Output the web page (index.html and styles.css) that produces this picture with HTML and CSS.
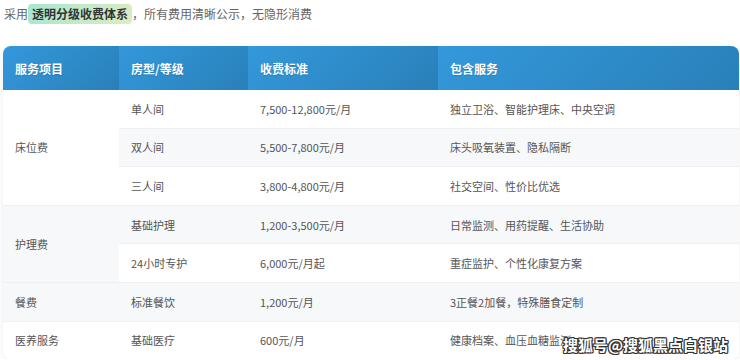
FILE: index.html
```html
<!DOCTYPE html>
<html lang="zh-CN">
<head>
    <meta charset="UTF-8">
    <meta name="viewport" content="width=device-width, initial-scale=1.0">
    <title>收费标准</title>
    <link rel="stylesheet" href="styles.css">
</head>
<body>
    <div class="page">
        <p class="intro">采用<span class="highlight">透明分级收费体系</span>，所有费用清晰公示，无隐形消费</p>

        <div class="table-wrap">
            <table class="fee-table">
                <colgroup>
                    <col class="c1"><col class="c2"><col class="c3"><col class="c4">
                </colgroup>
                <thead>
                    <tr>
                        <th>服务项目</th>
                        <th>房型/等级</th>
                        <th>收费标准</th>
                        <th>包含服务</th>
                    </tr>
                </thead>
                <tbody>
                    <tr>
                        <td rowspan="3">床位费</td>
                        <td>单人间</td>
                        <td>7,500-12,800元/月</td>
                        <td>独立卫浴、智能护理床、中央空调</td>
                    </tr>
                    <tr>
                        <td>双人间</td>
                        <td>5,500-7,800元/月</td>
                        <td>床头吸氧装置、隐私隔断</td>
                    </tr>
                    <tr>
                        <td>三人间</td>
                        <td>3,800-4,800元/月</td>
                        <td>社交空间、性价比优选</td>
                    </tr>
                    <tr>
                        <td rowspan="2">护理费</td>
                        <td>基础护理</td>
                        <td>1,200-3,500元/月</td>
                        <td>日常监测、用药提醒、生活协助</td>
                    </tr>
                    <tr>
                        <td>24小时专护</td>
                        <td>6,000元/月起</td>
                        <td>重症监护、个性化康复方案</td>
                    </tr>
                    <tr>
                        <td>餐费</td>
                        <td>标准餐饮</td>
                        <td>1,200元/月</td>
                        <td>3正餐2加餐，特殊膳食定制</td>
                    </tr>
                    <tr>
                        <td>医养服务</td>
                        <td>基础医疗</td>
                        <td>600元/月</td>
                        <td>健康档案、血压血糖监测</td>
                    </tr>
                </tbody>
            </table>
        </div>
    </div>

    <div class="watermark">搜狐号@搜狐黑点白银站</div>
</body>
</html>
```

FILE: styles.css
```css
body {
    margin: 0;
    background-color: #fff;
    font-family: "Noto Sans CJK SC", "Noto Sans", sans-serif;
    color: #555;
}
.page {
    padding: 0 1px 0 3px;
}
.intro {
    margin: 0;
    padding: 4px 0 0 1px;
    height: 42px;
    font-size: 12px;
    line-height: 20px;
    color: #666;
}
.highlight {
    display: inline-block;
    padding: 0 4px;
    border-radius: 4px;
    background: linear-gradient(120deg, #a8e6cf 0%, #dcedc1 100%);
    color: #333;
    font-weight: bold;
}
.table-wrap {
    border-radius: 8px;
    overflow: hidden;
    box-shadow: 0 1px 6px rgba(0,0,0,0.08);
}
.fee-table {
    width: 100%;
    border-collapse: collapse;
    table-layout: fixed;
    font-size: 11px;
}
.c1 { width: 116px; }
.c2 { width: 129px; }
.c3 { width: 190px; }
.fee-table th {
    height: 44px;
    padding: 0 12px;
    text-align: left;
    font-size: 12px;
    font-weight: bold;
    color: #fff;
    background: linear-gradient(135deg, #3498db 0%, #2980b9 100%);
    text-shadow: 0 1px 1px rgba(0,0,0,0.15);
}
.fee-table td {
    height: 37.6px;
    padding: 0 12px;
    border-bottom: 1px solid #eef0f3;
    background-color: #fff;
    color: #555;
}
.fee-table tbody tr:nth-child(even) td {
    background-color: #f7f8fa;
}
.fee-table tbody tr:last-child td {
    border-bottom: none;
}
.watermark {
    position: absolute;
    left: 563px;
    top: 334px;
    font-size: 15px;
    font-weight: bold;
    color: #fff;
    text-shadow: 1px 0 0 #333, -1px 0 0 #333, 0 1px 0 #333, 0 -1px 0 #333,
                 1px 1px 0 #333, -1px -1px 0 #333, 1px -1px 0 #333, -1px 1px 0 #333;
}
```
